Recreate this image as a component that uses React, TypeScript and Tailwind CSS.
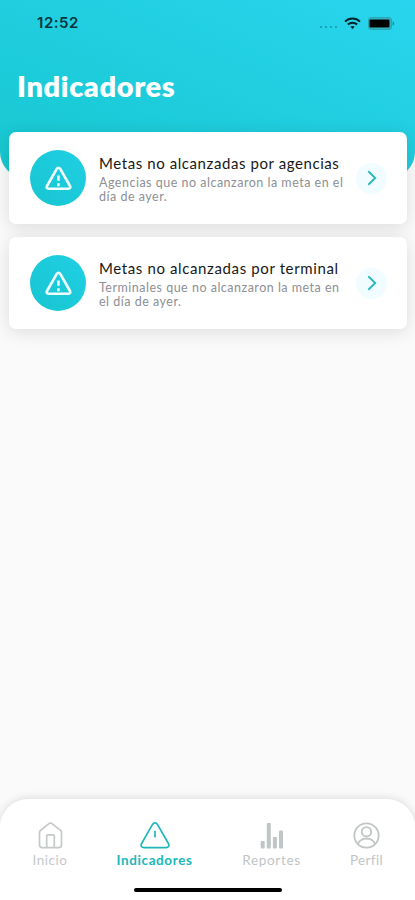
import type { ReactNode } from "react";

interface IndicatorCardProps {
  title: string;
  lines: string[];
  titleTracking: string;
}

const StatusBar = () => (
  <div className="flex h-[46px] items-center justify-between pr-[20px] pl-[37px] text-black">
    <span className="font-['Inter',sans-serif] text-[15px] leading-5 font-semibold tracking-[0.55px] text-[#06343a]">
      12:52
    </span>
    <div className="flex items-center">
      <div className="mt-2 mr-[7px] flex gap-[3px]">
        {[0, 1, 2, 3].map((dot) => (
          <span key={dot} className="size-[2px] rounded-full bg-[#1696a5]" />
        ))}
      </div>
      <svg className="mr-[7px] h-[13px] w-[17px]" viewBox="0 0 17 13" fill="none" stroke="#03242a" strokeWidth="2">
        <path d="M1 4.6C5.2.5 11.8.5 16 4.6" />
        <path d="M3.8 7.5c2.7-2.5 6.7-2.5 9.4 0" />
        <path d="M6.3 9.7c1.3-1.1 3.1-1.1 4.4 0L8.5 12Z" fill="#03242a" stroke="none" />
      </svg>
      <svg className="h-[13px] w-[27px]" viewBox="0 0 27 13">
        <rect x=".6" y=".6" width="22.8" height="11.8" rx="3" fill="#35b9c8" stroke="#2ba5b2" strokeWidth="1.2" />
        <rect x="1.5" y="2.5" width="20" height="8" rx="1" fill="#000" />
        <path d="M24.6 4.2c2 .8 2 3.8 0 4.6Z" fill="#168b99" />
      </svg>
    </div>
  </div>
);

const WarningIcon = () => (
  <svg className="ml-px h-[25px] w-[27px]" viewBox="0 0 27 25" fill="none" stroke="#f2feff" strokeLinejoin="round">
    <path d="M11.9 2.7 2 20c-.8 1.5 0 2.7 1.5 2.7h20c1.5 0 2.3-1.2 1.5-2.7L15.1 2.7c-.8-1.3-2.4-1.3-3.2 0Z" strokeWidth="2.6" />
    <path d="M13.5 9.5v5.3M13.5 17.2v3" strokeWidth="2.4" />
  </svg>
);

const IndicatorCard = ({ title, lines, titleTracking }: IndicatorCardProps) => {
  return (
    <div className="flex h-[92px] items-center rounded-[7px] bg-white px-[21px] shadow-[0_3px_18px_rgba(0,0,0,0.12)]">
      <div className="flex size-[56px] shrink-0 items-center justify-center rounded-full bg-linear-to-tr from-[#17c6d0] to-[#20cfe4]">
        <WarningIcon />
      </div>
      <div className="ml-[13px] flex-1 whitespace-nowrap">
        <h2 className={`text-[15px] leading-5 text-[#181818] ${titleTracking}`}>{title}</h2>
        <div className="mt-[3px] text-[12.5px] leading-[14px] tracking-[0.5px] text-[#8d9094]">
          {lines.map((line) => (
            <p key={line}>{line}</p>
          ))}
        </div>
      </div>
      <div className="-mr-px flex size-[31px] shrink-0 items-center justify-center rounded-full bg-[#f0fcff]">
        <svg className="h-4 w-[10px]" viewBox="0 0 10 16" fill="none" stroke="#2bb9bc" strokeWidth="1.9">
          <path d="m1.3 1.3 6.9 6.7-6.9 6.7" />
        </svg>
      </div>
    </div>
  );
};

interface NavItemProps {
  label: string;
  className: string;
  labelClass: string;
  children: ReactNode;
}

const NavItem = ({ label, className, labelClass, children }: NavItemProps) => (
  <div className={`flex flex-col items-center ${className}`}>
    <div className="flex h-[28px] items-center justify-center">{children}</div>
    <span className={`mt-[3px] leading-4 whitespace-nowrap ${labelClass}`}>{label}</span>
  </div>
);

const BottomNav = () => (
  <nav className="relative h-[101px] rounded-t-[28px] bg-white pt-[22px] shadow-[0_-1px_8px_rgba(0,0,0,0.12)]">
    <div className="flex">
      <NavItem label="Inicio" className="w-[100px] text-[#c5c9ca]" labelClass="text-[13.5px] tracking-[0.5px]">
        <svg className="h-[27px] w-[25px]" viewBox="0 0 25 27" fill="none" stroke="currentColor" strokeWidth="1.7" strokeLinejoin="round">
          <path d="M1.5 10.5c0-1 .4-1.7 1.2-2.3l8.3-6.5c1-.8 2-.8 3 0l8.3 6.5c.8.6 1.2 1.3 1.2 2.3V23c0 1.6-1 2.6-2.6 2.6H4.1c-1.6 0-2.6-1-2.6-2.6Z" />
          <path d="M8.7 25.5V14c0-.8.4-1.2 1.2-1.2h5.2c.8 0 1.2.4 1.2 1.2v11.5" />
        </svg>
      </NavItem>
      <NavItem label="Indicadores" className="w-[109px] text-[#20b7bb]" labelClass="text-[13.5px] font-bold tracking-[0.6px]">
        <svg className="h-[27px] w-[30px]" viewBox="0 0 30 27" fill="none" stroke="currentColor" strokeWidth="1.7" strokeLinejoin="round">
          <path d="M12.7 2.2 1.6 21.5c-1.2 2.2 0 4.1 2.3 4.1h22.2c2.3 0 3.5-1.9 2.3-4.1L17.3 2.2c-1.1-1.8-3.5-1.8-4.6 0Z" />
          <path d="M15 8.8v6.7" />
        </svg>
      </NavItem>
      <NavItem label="Reportes" className="w-[125px] text-[#c0c5c5]" labelClass="text-[13.5px] tracking-[0.7px]">
        <svg className="h-[27px] w-[24px]" viewBox="0 0 24 27" fill="currentColor">
          <rect x=".7" y="19" width="4" height="7.5" rx="1" />
          <rect x="6.8" y="1" width="4" height="25.5" rx="1" />
          <rect x="12.9" y="15" width="4" height="11.5" rx="1" />
          <rect x="19" y="8.5" width="4" height="18" rx="1" />
        </svg>
      </NavItem>
      <NavItem label="Perfil" className="w-[65px] text-[#c0c5c5]" labelClass="text-[13.5px] tracking-[0.35px]">
        <svg className="size-[27px]" viewBox="0 0 27 27" fill="none" stroke="currentColor" strokeWidth="1.8">
          <circle cx="13.5" cy="13.5" r="12.2" />
          <circle cx="13.5" cy="9.8" r="4.7" />
          <path d="M5 21.8c1.3-3.1 4.5-5.1 8.5-5.1s7.2 2 8.5 5.1" />
        </svg>
      </NavItem>
    </div>
    <div className="mx-auto mt-[20px] h-[4px] w-[148px] rounded-full bg-black" />
  </nav>
);

export default function App() {
  return (
    <div className="flex h-[900px] w-[415px] flex-col overflow-hidden bg-[#fafafa] font-['Lato',sans-serif]">
      <header className="h-[178px] shrink-0 rounded-b-[26px] bg-linear-to-tr from-[#16c7cf] to-[#28d5ee]">
        <StatusBar />
        <h1 className="mt-[20px] pl-[17px] text-[29px] leading-10 font-extrabold tracking-[0.6px] text-white">
          Indicadores
        </h1>
      </header>
      <main className="-mt-[46px] flex flex-1 flex-col gap-[13px] pr-2 pl-[9px]">
        <IndicatorCard
          title="Metas no alcanzadas por agencias"
          titleTracking="tracking-[0.58px]"
          lines={["Agencias que no alcanzaron la meta en el", "día de ayer."]}
        />
        <IndicatorCard
          title="Metas no alcanzadas por terminal"
          titleTracking="tracking-[0.62px]"
          lines={["Terminales que no alcanzaron la meta en", "el día de ayer."]}
        />
      </main>
      <BottomNav />
    </div>
  );
}
